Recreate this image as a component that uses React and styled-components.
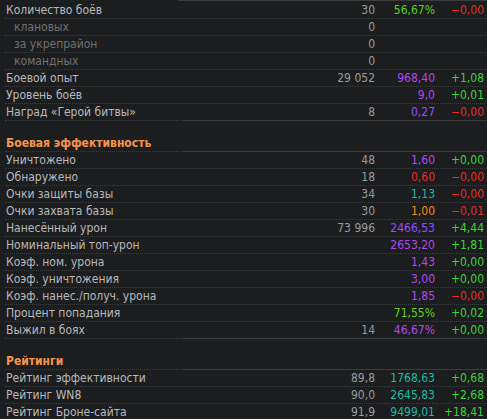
import React from "react";
import styled, { createGlobalStyle } from "styled-components";

const Global = createGlobalStyle`
  html, body { margin: 0; padding: 0; background: #1c1d1f; }
  body { font-family: "DejaVu Sans Condensed", "DejaVu Sans", sans-serif; font-size: 12px; }
`;

const C = {
  green: "#5fd11d",
  plus: "#3fd33a",
  red: "#ea2a23",
  purple: "#b447f0",
  violet: "#9a4cff",
  teal: "#1fb9a3",
  orange: "#f58a1c",
};

const ruleBg = `
  background-image: linear-gradient(#3a3b3d, #3a3b3d);
  background-repeat: no-repeat;
  background-origin: border-box;
  background-size: calc(100% - 178px) 1px;
`;

const Page = styled.div`
  padding: 2px 0 0 5px;
  ${ruleBg}
  background-position: right top;
`;

const Section = styled.section`
  margin-top: ${(p) => (p.$first ? 0 : 14)}px;
`;

const Row = styled.div`
  display: flex;
  align-items: center;
  height: 17px;
  box-sizing: border-box;
  line-height: 16px;
  border-bottom: 1px dotted #3b3c3e;
  padding: 0 3px 0 1px;
  ${(p) => (p.$rule ? ruleBg : "")}
  background-position: right bottom;
`;

const Header = styled(Row)`
  color: #f7944c;
  font-weight: bold;
  ${ruleBg}
  background-position: right bottom;
`;

const Label = styled.div`
  flex: 1;
  color: ${(p) => (p.$sub ? "#707172" : "#b9babb")};
  padding-left: ${(p) => (p.$sub ? 8 : 0)}px;
  white-space: nowrap;
`;

const Count = styled.div`
  width: 60px;
  text-align: right;
  color: #9b9c9d;
`;

const Value = styled.div`
  width: 60px;
  text-align: right;
  color: ${(p) => p.$c || "#b9babb"};
`;

const Delta = styled.div`
  width: 49px;
  text-align: right;
  color: ${(p) => (p.$neg ? C.red : C.plus)};
`;

const sections = [
  {
    title: null,
    rows: [
      ["Количество боёв", "30", "56,67%", C.green, "−0,00"],
      ["клановых", "0", "", null, "", true],
      ["за укрепрайон", "0", "", null, "", true],
      ["командных", "0", "", null, "", true],
      ["Боевой опыт", "29 052", "968,40", C.purple, "+1,08"],
      ["Уровень боёв", "", "9,0", C.purple, "+0,01"],
      ["Наград «Герой битвы»", "8", "0,27", C.violet, "−0,00"],
    ],
  },
  {
    title: "Боевая эффективность",
    rows: [
      ["Уничтожено", "48", "1,60", C.purple, "+0,00"],
      ["Обнаружено", "18", "0,60", C.red, "−0,00"],
      ["Очки защиты базы", "34", "1,13", C.teal, "−0,00"],
      ["Очки захвата базы", "30", "1,00", C.orange, "−0,01"],
      ["Нанесённый урон", "73 996", "2466,53", C.violet, "+4,44"],
      ["Номинальный топ-урон", "", "2653,20", C.purple, "+1,81"],
      ["Коэф. ном. урона", "", "1,43", C.purple, "+0,00"],
      ["Коэф. уничтожения", "", "3,00", C.purple, "+0,00"],
      ["Коэф. нанес./получ. урона", "", "1,85", C.purple, "−0,00"],
      ["Процент попадания", "", "71,55%", C.green, "+0,02"],
      ["Выжил в боях", "14", "46,67%", C.purple, "+0,00"],
    ],
  },
  {
    title: "Рейтинги",
    rows: [
      ["Рейтинг эффективности", "89,8", "1768,63", C.teal, "+0,68"],
      ["Рейтинг WN8", "90,0", "2645,83", C.teal, "+2,68"],
      ["Рейтинг Броне-сайта", "91,9", "9499,01", C.teal, "+18,41"],
    ],
  },
];

export default function App() {
  return (
    <>
      <Global />
      <Page>
        {sections.map((s, si) => (
          <Section key={si} $first={si === 0}>
            {s.title && <Header>{s.title}</Header>}
            {s.rows.map((r, ri) => (
              <Row key={ri} $rule={ri === s.rows.length - 1}>
                <Label $sub={r[5]}>{r[0]}</Label>
                <Count>{r[1]}</Count>
                <Value $c={r[3]}>{r[2]}</Value>
                <Delta $neg={r[4].startsWith("−")}>{r[4]}</Delta>
              </Row>
            ))}
          </Section>
        ))}
      </Page>
    </>
  );
}
